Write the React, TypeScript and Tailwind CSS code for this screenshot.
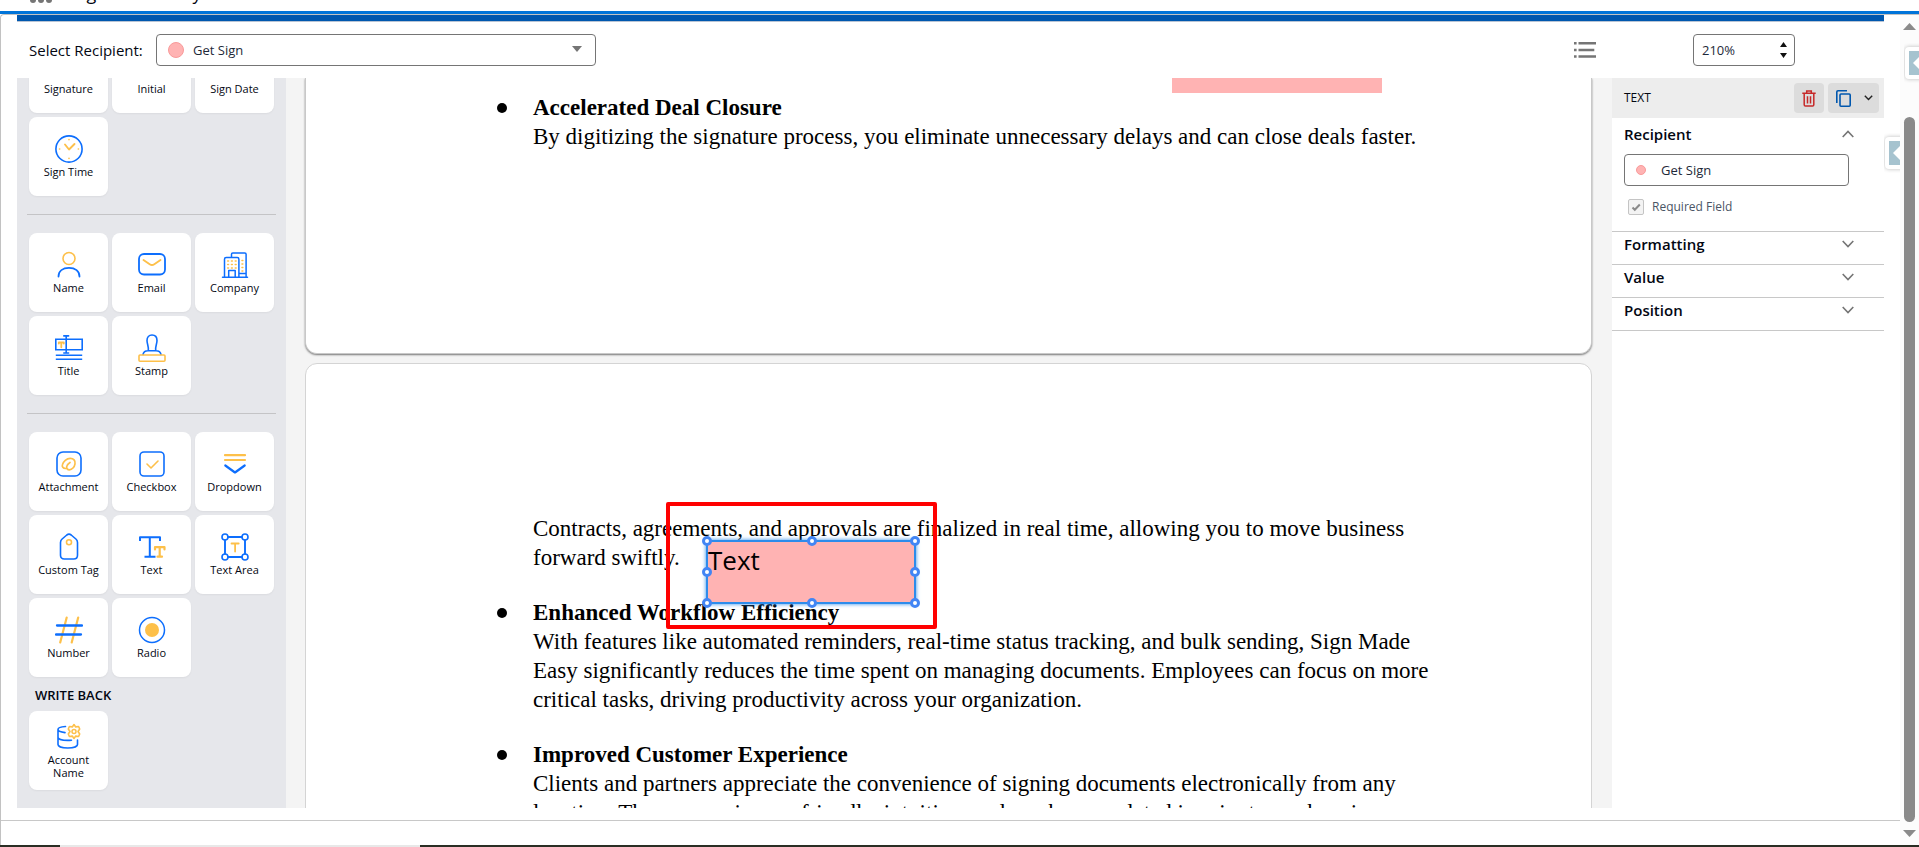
import type { ReactNode } from 'react';

const BLUE = '#0d6efd';
const GOLD = '#fdc04a';

function Icon({ children }: { children: ReactNode }) {
  return (
    <svg
      viewBox="0 0 28 28"
      className="w-7 h-7"
      fill="none"
      stroke={BLUE}
      strokeWidth="1.6"
      strokeLinecap="round"
      strokeLinejoin="round"
      aria-hidden="true"
    >
      {children}
    </svg>
  );
}

const icons: Record<string, ReactNode> = {
  clock: (
    <Icon>
      <circle cx="14" cy="14" r="13.1" />
      <path d="M10 9.5l4 5 5.5-5.5" stroke={GOLD} strokeWidth="1.9" />
      <path d="M14 4.5v.2M14 23.3v.2M4.5 14h.2M23.3 14h.2" stroke={GOLD} />
    </Icon>
  ),
  name: (
    <Icon>
      <circle cx="14" cy="7.5" r="6" stroke={GOLD} />
      <path d="M3.5 25.5c0-5.500 4.300-8.600 10.500-8.600s10.500 3.100 10.500 8.600" strokeWidth="1.8" />
    </Icon>
  ),
  email: (
    <Icon>
      <rect x="1" y="3" width="26" height="20.5" rx="5" strokeWidth="1.8" />
      <path d="M5.5 9l6.2 4.2c1.5 1 3.1 1 4.6 0L22.500 9" stroke={GOLD} strokeWidth="1.9" />
    </Icon>
  ),
  company: (
    <Icon>
      <path d="M3.5 26V8.200c0-1 .6-1.700 1.700-1.700h11c1.100 0 1.700.7 1.700 1.700V26M1.500 26.200h25M10.500 6V3.200c0-.8.5-1.300 1.300-1.300h12c.8 0 1.300.5 1.300 1.300V26M7.700 26v-6.500h6.500V26M18.500 22.500h6" strokeWidth="1.5" />
      <path d="M6.700 10h.8M10.500 10h.8M14.300 10h.8M6.700 13.500h.8M10.500 13.500h.8M14.300 13.500h.8M6.700 17h.8M10.500 17h.8M14.300 17h.8M21 9.500h.8M21 13h.8M21 16.500h.8M21 20h.8" stroke={GOLD} />
    </Icon>
  ),
  title: (
    <Icon>
      <path d="M.8 5.300h26.400v10.400H.8zM.8 21.300h26.400M.8 25.200h26.400" strokeLinecap="butt" strokeLinejoin="miter" />
      <path d="M11.200 2v17M8.800 1.900h4.800M8.800 19h4.800" />
      <path d="M3.800 9.500V8.500h5v1M6.300 8.700v4.600" stroke={GOLD} strokeWidth="1.8" />
    </Icon>
  ),
  stamp: (
    <Icon>
      <path d="M10.300 16.500c.5-4.500-1.300-6.500-1.300-10C9 3 11 1 14 1s5 2 5 5.500c0 3.500-1.800 5.500-1.300 10M5 20.500c.5-2.500 2.300-3.800 5-3.800h8c2.700 0 4.500 1.300 5 3.800" />
      <rect x="1" y="21" width="26" height="6.200" rx="1" stroke={GOLD} />
    </Icon>
  ),
  attachment: (
    <Icon>
      <rect x="2" y="2" width="24" height="24" rx="6" />
      <path d="M10.500 18.500c-2.500 0-3.800-1.800-3-4 .8-2.700 4-6.200 7.700-6.200 3.500 0 5.300 2.300 4.800 5.500-.5 3.300-3 6-5.600 6-2 0-3.100-1.400-2.700-3.200.4-1.900 1.800-3.300 3.300-4.200" stroke={GOLD} strokeWidth="1.7" />
    </Icon>
  ),
  checkbox: (
    <Icon>
      <rect x="2" y="2" width="24" height="24" rx="4" />
      <path d="M9 14l4 4 7-7" stroke={GOLD} />
    </Icon>
  ),
  dropdown: (
    <Icon>
      <path d="M4 5.200h20M4 10h20" stroke={GOLD} strokeWidth="2.2" />
      <path d="M4.300 15.500L14 22.500l9.700-7" strokeWidth="2.2" />
    </Icon>
  ),
  tag: (
    <Icon>
      <path d="M5.500 9.500c0-1.500.5-2.500 1.600-3.500l4.700-4c1.400-1.100 3-1.100 4.400 0l4.700 4c1.100 1 1.600 2 1.600 3.500v12.700c0 2.500-1.400 3.800-3.800 3.800H9.300c-2.400 0-3.800-1.300-3.800-3.800z" />
      <circle cx="14" cy="9.300" r="2.500" stroke={GOLD} />
    </Icon>
  ),
  text: (
    <Icon>
      <path d="M2 7V4.300h20V7M11.800 4.300v19.200M7.500 23.700h9" strokeWidth="2" strokeLinecap="square" />
      <path d="M17 16.500v-2.300h9.500v2.300M21.700 14.200v9.500M19.500 23.700h4.500" stroke={GOLD} strokeWidth="2.2" />
    </Icon>
  ),
  textArea: (
    <Icon>
      <path d="M7.200 4h13.600M7.200 24h13.600M4 7.200v13.600M24 7.200v13.600" strokeWidth="1.9" />
      <circle cx="4" cy="4" r="3" />
      <circle cx="24" cy="4" r="3" />
      <circle cx="4" cy="24" r="3" />
      <circle cx="24" cy="24" r="3" />
      <path d="M10.500 10.500h7.200M14.100 10.500v8" stroke={GOLD} strokeWidth="1.8" />
    </Icon>
  ),
  number: (
    <Icon>
      <path d="M11.700 1.500L5.200 26.500M23.200 1.500L16.700 26.500" stroke={GOLD} strokeWidth="2.2" />
      <path d="M2 9.500h25M1 18.500h25" strokeWidth="2.3" />
    </Icon>
  ),
  radio: (
    <Icon>
      <circle cx="14" cy="14" r="12.5" strokeWidth="1.5" />
      <circle cx="14" cy="14" r="7" fill={GOLD} stroke="none" />
    </Icon>
  ),
  account: (
    <Icon>
      <path d="M10.500 3.500C5.800 3.800 3 4.900 3 6.400v15.200c0 1.800 4 3.400 9.800 3.400s9.700-1.600 9.700-3.400v-4.500M3 6.600c0 1.400 2.800 2.600 7 3M3 14.200c0 1.800 4 3.200 9.800 3.200 1.500 0 2.700-.1 3.700-.2" />
      <path d="M19 1.600l1.700 2.300 2.900-.4 1.100 2.500-1.700 2.500 1.700 2.500-1.100 2.500-2.900-.4L19 15.400l-1.700-2.300-2.900.4-1.100-2.500L15 8.500 13.300 6l1.100-2.500 2.900.4z" stroke={GOLD} />
      <circle cx="19" cy="8.500" r="2" stroke={GOLD} strokeWidth="1.5" />
    </Icon>
  ),
};

function Tile({ icon, label }: { icon?: string; label: string }) {
  return (
    <button
      type="button"
      className="w-[79px] h-[79px] flex flex-col items-center justify-center gap-0.5 bg-white rounded-lg shadow-xs text-[11px] leading-[13px] text-gray-950"
    >
      {icon ? icons[icon] : <span className="w-7 h-7" />}
      <span className="px-2">{label}</span>
    </button>
  );
}

function Group({ items }: { items: [string, string][] }) {
  return (
    <div className="flex flex-wrap gap-1 px-0.5">
      {items.map(([icon, label]) => (
        <Tile key={label} icon={icon} label={label} />
      ))}
    </div>
  );
}

function Sidebar() {
  return (
    <aside className="w-[269px] shrink-0 overflow-hidden bg-[#e6e7eb] px-2.5">
      <div className="-mt-11">
        <Group items={[['', 'Signature'], ['', 'Initial'], ['', 'Sign Date'], ['clock', 'Sign Time']]} />
        <hr className="my-[18px] border-[#c4c4c6]" />
        <Group items={[['name', 'Name'], ['email', 'Email'], ['company', 'Company'], ['title', 'Title'], ['stamp', 'Stamp']]} />
        <hr className="my-[18px] border-[#c4c4c6]" />
        <Group
          items={[
            ['attachment', 'Attachment'],
            ['checkbox', 'Checkbox'],
            ['dropdown', 'Dropdown'],
            ['tag', 'Custom Tag'],
            ['text', 'Text'],
            ['textArea', 'Text Area'],
            ['number', 'Number'],
            ['radio', 'Radio'],
          ]}
        />
        <h2 className="px-2 pt-2 pb-1.5 text-[13px] leading-5 font-semibold text-gray-950">WRITE BACK</h2>
        <Group items={[['account', 'Account Name']]} />
      </div>
    </aside>
  );
}

function Toolbar() {
  return (
    <div className="h-14 shrink-0 flex items-center pl-3 pr-[89px]">
      <label htmlFor="recipient" className="w-[127px] text-[15px] whitespace-nowrap">
        Select Recipient:
      </label>
      <div className="relative w-[440px]">
        <select
          id="recipient"
          className="w-full h-8 pl-9 pt-px appearance-none border border-[#757575] rounded bg-white text-[13px] text-gray-800"
        >
          <option>Get Sign</option>
        </select>
        <span className="absolute left-3 top-2 w-4 h-4 rounded-full bg-[#ffb3b3] border border-[#f99a9a]" />
        <svg viewBox="0 0 10 6" className="absolute right-3.5 top-3 w-2.5 h-1.5" fill="#757575" aria-hidden="true">
          <path d="M0 0h10L5 6z" />
        </svg>
      </div>
      <button type="button" aria-label="Document list" className="ml-auto">
        <svg viewBox="0 0 22 16" className="w-[22px] h-4" fill="#757575">
          <path d="M0 0h2.600v2.600H0zM4.500 0H22v2.600H4.500zM0 6.700h2.600v2.600H0zM4.500 6.700h15.800v2.600H4.500zM0 13.200h2.600v2.600H0zM4.500 13.200H22v2.600H4.500z" />
        </svg>
      </button>
      <div className="relative ml-[97px] w-[102px]">
        <input
          aria-label="Zoom"
          defaultValue="210%"
          className="w-full h-8 pl-2 border border-[#757575] rounded bg-white text-[13px] text-gray-800"
        />
        <svg viewBox="0 0 7 16" className="absolute right-2 top-2 w-[7px] h-4" fill="#111" aria-hidden="true">
          <path d="M0 5l3.500-5L7 5zM0 11h7l-3.500 5z" />
        </svg>
      </div>
    </div>
  );
}

function Bullet({ title, lines }: { title: string; lines: string[] }) {
  return (
    <li className="flex gap-[26px] mb-[26px]">
      <span className="w-2.5 h-2.5 mt-2.5 rounded-full bg-black" />
      <div>
        <strong>{title}</strong>
        {lines.map((line) => (
          <p key={line}>{line}</p>
        ))}
      </div>
    </li>
  );
}

const handles = [
  '-left-1.5 -top-1.5',
  'left-[99px] -top-1.5',
  '-right-1.5 -top-1.5',
  '-left-1.5 top-[25px]',
  '-right-1.5 top-[25px]',
  '-left-1.5 -bottom-1.5',
  'left-[99px] -bottom-1.5',
  '-right-1.5 -bottom-1.5',
];

function Document() {
  return (
    <main className="flex-1 overflow-hidden flex flex-col gap-[9px] bg-[#f4f4f4] pl-[19px] pr-5 font-['Liberation_Serif',serif] text-[23px] leading-[29px] text-black whitespace-nowrap">
      <section className="relative h-[276px] shrink-0 bg-white border border-t-0 border-[#c8c8c8] rounded-b-xl shadow-[0_1px_2px_#777] pt-[15px] pl-[191px]">
        <div className="absolute left-[866px] top-0 w-[210px] h-[15px] bg-[#ffb3b3]" />
        <ul>
          <Bullet
            title="Accelerated Deal Closure"
            lines={[
              'By digitizing the signature process, you eliminate unnecessary delays and can close deals faster.',
            ]}
          />
        </ul>
      </section>
      <section className="relative h-[900px] shrink-0 bg-white border border-[#d4d4d4] rounded-t-xl pt-[150px] pl-[191px]">
        <div className="pl-9 mb-[26px]">
          <p>Contracts, agreements, and approvals are finalized in real time, allowing you to move business</p>
          <p>forward swiftly.</p>
        </div>
        <ul>
          <Bullet
            title="Enhanced Workflow Efficiency"
            lines={[
              'With features like automated reminders, real-time status tracking, and bulk sending, Sign Made',
              'Easy significantly reduces the time spent on managing documents. Employees can focus on more',
              'critical tasks, driving productivity across your organization.',
            ]}
          />
          <Bullet
            title="Improved Customer Experience"
            lines={[
              'Clients and partners appreciate the convenience of signing documents electronically from any',
              'location. The process is user-friendly, intuitive, and can be completed in minutes, enhancing',
            ]}
          />
        </ul>
        <div className="absolute left-[400px] top-[176px] w-[210px] h-[64px] bg-[#ffb3b3] border-2 border-[#2d8ceb] shadow-[0_0_4px_#2d8ceb] font-['Open_Sans',sans-serif] text-[26px] leading-9">
          Text
          {handles.map((pos) => (
            <span key={pos} className={`absolute w-2.5 h-2.5 rounded-full bg-white border-3 border-[#4285f4] ${pos}`} />
          ))}
        </div>
        <div className="absolute left-[360px] top-[138px] w-[271px] h-[127px] border-4 border-[#ff0000] rounded-xs" />
      </section>
    </main>
  );
}

function Chevron({ up = false }: { up?: boolean }) {
  return (
    <svg viewBox="0 0 12 8" className="w-3 h-2" fill="none" stroke="#757575" strokeWidth="1.6" aria-hidden="true">
      {up ? <path d="M.7 7L6 1.500 11.300 7" /> : <path d="M.7 1L6 6.500 11.300 1" />}
    </svg>
  );
}

function PropertiesPanel() {
  return (
    <aside className="w-[272px] shrink-0 bg-white text-gray-950">
      <header className="h-10 flex items-center gap-1 bg-[#ededed] pl-3 pr-[5px]">
        <h2 className="text-xs font-medium">TEXT</h2>
        <button type="button" aria-label="Delete" className="ml-auto w-[30px] h-[30px] grid place-items-center bg-[#dcdcdc] rounded">
          <svg viewBox="0 0 14 17" className="w-3.5 h-[17px]" fill="none" stroke="#c62828" strokeWidth="1.5">
            <path d="M.3 3.200h13.400M4.700 2.800V1h4.600v1.800M2.200 3.500v11.300c0 .8.5 1.300 1.300 1.300h7c.8 0 1.300-.5 1.300-1.300V3.500M5.500 6.200v7.200M8.500 6.200v7.200" />
          </svg>
        </button>
        <button type="button" aria-label="Duplicate" className="w-[51px] h-[30px] flex items-center justify-between pl-2 pr-1.5 bg-[#dcdcdc] rounded">
          <svg viewBox="0 0 15 17" className="w-[15px] h-[17px]" fill="none" stroke="#0057ae" strokeWidth="1.6">
            <path d="M.8 13V2c0-.8.4-1.200 1.200-1.200h9" />
            <rect x="4" y="4" width="10.2" height="12.2" rx="1" />
          </svg>
          <svg viewBox="0 0 9 6" className="w-[9px] h-1.5" fill="none" stroke="#222" strokeWidth="1.4">
            <path d="M.8.8l3.700 3.700L8.200.8" />
          </svg>
        </button>
      </header>
      <section className="h-[114px] border-b border-[#c8c8c8]">
        <button type="button" className="w-full h-9 flex items-center justify-between pl-3 pr-[30px] pb-1 text-[15px] font-semibold">
          Recipient
          <Chevron up />
        </button>
        <div className="relative ml-3 w-[225px]">
          <input
            aria-label="Recipient"
            readOnly
            value="Get Sign"
            className="w-full h-8 pl-9 border border-[#757575] rounded text-[13px] text-gray-800"
          />
          <span className="absolute left-3 top-[11px] w-2.5 h-2.5 rounded-full bg-[#ffb3b3] border border-[#f99a9a]" />
        </div>
        <label className="relative flex items-center gap-2 pl-4 mt-3 text-xs leading-[18px] text-gray-600">
          <input
            type="checkbox"
            defaultChecked
            className="w-4 h-4 appearance-none border border-[#c4c4c4] bg-[#f3f3f3] rounded-xs"
          />
          <svg viewBox="0 0 16 16" className="absolute left-4 w-4 h-4" fill="none" stroke="#8a8a8a" strokeWidth="2" aria-hidden="true">
            <path d="M4.500 8.500l2.300 2.300 5-5.300" />
          </svg>
          Required Field
        </label>
      </section>
      {['Formatting', 'Value', 'Position'].map((name) => (
        <button
          key={name}
          type="button"
          className="w-full h-[33px] flex items-center justify-between pl-3 pr-[30px] pb-2 text-[15px] font-semibold border-b border-[#c8c8c8]"
        >
          {name}
          <Chevron />
        </button>
      ))}
    </aside>
  );
}

function DrawerTab() {
  return (
    <button type="button" aria-label="Open drawer" className="w-5 h-8 p-1 bg-white rounded-l shadow-[0_0_4px_#bbb]">
      <span className="w-4 h-full flex items-center bg-[#a6c3cf]">
        <svg viewBox="0 0 12 14" className="ml-1 w-3 h-3.5 shrink-0" fill="#fff" aria-hidden="true">
          <path d="M0 7l7-7v14z" />
        </svg>
      </span>
    </button>
  );
}

export default function App() {
  return (
    <div className="h-screen flex flex-col overflow-hidden bg-white font-['Open_Sans','Noto_Sans',sans-serif] text-gray-950">
      <nav className="h-[11px] shrink-0 overflow-hidden flex items-start pl-[30px]">
        <span className="flex gap-0.5 -mt-[3px]" aria-hidden="true">
          <i className="w-1.5 h-1.5 rounded-full bg-[#757575]" />
          <i className="w-1.5 h-1.5 rounded-full bg-[#757575]" />
          <i className="w-1.5 h-1.5 rounded-full bg-[#757575]" />
        </span>
        <span className="-mt-[19px] ml-5 text-lg leading-6">Sign Made Easy</span>
      </nav>
      <div className="h-[3px] shrink-0 bg-[#0074d9]" />
      <div className="flex-1 min-h-0 flex border-t border-l border-[#c2c2c2] rounded-tl">
        <div className="flex-1 min-w-0 flex flex-col">
          <div className="relative flex-1 min-h-0 flex flex-col pl-4 pr-4 pb-3 border-b border-[#c8c8c8]">
            <div className="h-[7px] shrink-0 bg-[#0057ae] border-b border-[#b9c4d4]" />
            <Toolbar />
            <div className="flex-1 min-h-0 flex">
              <Sidebar />
              <Document />
              <PropertiesPanel />
            </div>
            <div className="absolute right-0 top-[118px] w-4 overflow-hidden py-1 pl-px">
              <DrawerTab />
            </div>
          </div>
          <div className="h-6" />
        </div>
        <div className="relative w-[19px] shrink-0 flex flex-col items-center bg-[#fcfcfc] pt-2 pb-2">
          <svg viewBox="0 0 13 7" className="w-[13px] h-[7px]" fill="#8a8a8a" aria-hidden="true">
            <path d="M0 7h13L6.500 0z" />
          </svg>
          <div className="flex-1 w-[11px] mt-[87px] mb-2 rounded-full bg-[#8a8a8a]" />
          <svg viewBox="0 0 13 7" className="w-[13px] h-[7px]" fill="#8a8a8a" aria-hidden="true">
            <path d="M0 0h13L6.500 7z" />
          </svg>
          <div className="absolute right-0 top-7 w-[15px] overflow-hidden py-1 pl-px">
            <DrawerTab />
          </div>
        </div>
      </div>
      <div className="h-0.5 shrink-0 flex bg-[#2a2e24]">
        <div className="ml-[60px] w-[360px] bg-[#e8e8e8]" />
      </div>
    </div>
  );
}
